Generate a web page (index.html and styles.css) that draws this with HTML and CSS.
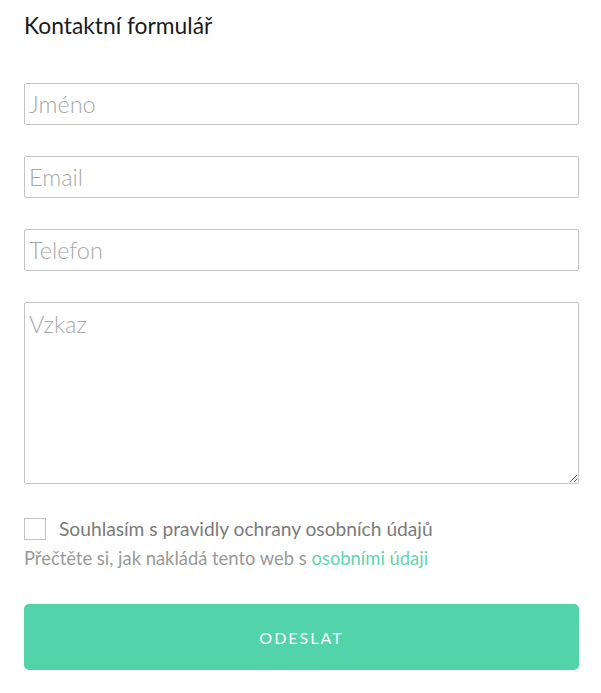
FILE: index.html
```html
<!DOCTYPE html>
<html lang="cs">
<head>
  <meta charset="UTF-8" />
  <meta name="viewport" content="width=device-width, initial-scale=1.0" />
  <title>Kontaktní formulář</title>
  <link rel="stylesheet" href="styles.css">
</head>
<body>
  <form class="kontakt">
    <h2 class="nadpis">Kontaktní formulář</h2>

    <input class="pole" type="text" placeholder="Jméno">
    <input class="pole" type="email" placeholder="Email">
    <input class="pole" type="tel" placeholder="Telefon">
    <textarea class="pole zprava" placeholder="Vzkaz"></textarea>

    <label class="souhlas">
      <input type="checkbox">
      <span class="ctverec"></span>
      Souhlasím s pravidly ochrany osobních údajů
    </label>
    <p class="info">Přečtěte si, jak nakládá tento web s <a href="#">osobními údaji</a></p>

    <button type="button" class="odeslat">ODESLAT</button>
  </form>
</body>
</html>
```

FILE: styles.css
```css
body {
  margin: 0;
  padding: 0 22px 0 24px;
  background: #fff;
  color: #111;
  font-family: 'Source Sans Pro', Lato, sans-serif;
}
.kontakt {
  display: flex;
  flex-direction: column;
}
.nadpis {
  margin: 10px 0 0;
  font-size: 22.8px;
  font-weight: 400;
  line-height: 30px;
  color: #1a1a1a;
}
.pole {
  margin-top: 31px;
  height: 42px;
  box-sizing: border-box;
  border: 1px solid #c4c4c4;
  border-radius: 2px;
  padding: 2px 4px;
  font-family: inherit;
  font-size: 23.5px;
  font-weight: 300;
  color: #333;
  outline: none;
}
.kontakt .nadpis + .pole {
  margin-top: 43px;
}
.pole::placeholder {
  color: #a8a8a8;
}
.zprava {
  height: 182px;
  padding-top: 7px;
  resize: vertical;
}
.souhlas {
  display: flex;
  align-items: center;
  margin-top: 33px;
  font-size: 19.2px;
  color: #7a7a7a;
  line-height: 24px;
}
.souhlas input {
  display: none;
}
.ctverec {
  width: 20px;
  height: 20px;
  border: 1px solid #c4c4c4;
  margin-right: 13px;
}
.info {
  margin: 5px 0 0;
  font-size: 18.4px;
  color: #999;
  line-height: 24px;
}
.info a {
  color: #5fd6ae;
  text-decoration: none;
}
.odeslat {
  margin-top: 34px;
  height: 66px;
  border: none;
  border-radius: 5px;
  background: #52d3aa;
  color: #fff;
  font-family: inherit;
  font-size: 16px;
  letter-spacing: 2px;
  cursor: pointer;
}
```
